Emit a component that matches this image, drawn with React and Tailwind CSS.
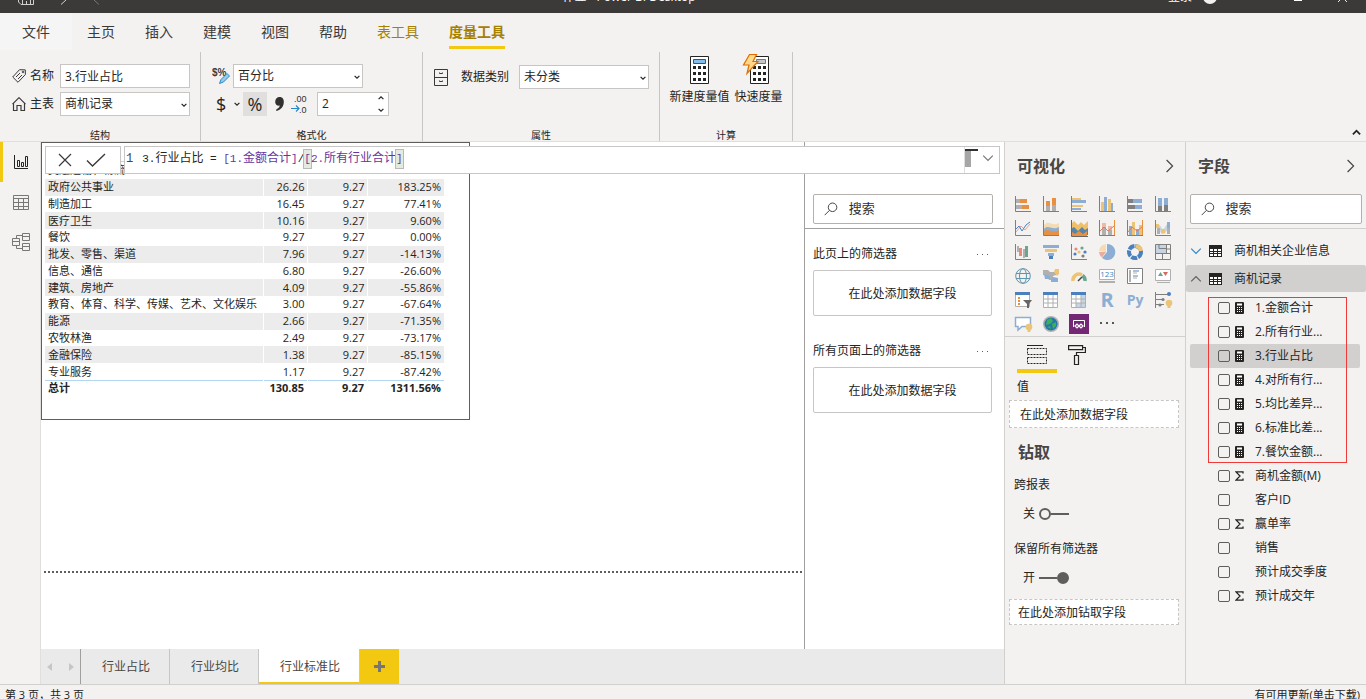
import React, { useState } from 'react';
import clsx from 'clsx';

const filas = [
    ['交通运输、物流', '39.16', '9.27', '322.42%'],
    ['政府公共事业', '26.26', '9.27', '183.25%'],
    ['制造加工', '16.45', '9.27', '77.41%'],
    ['医疗卫生', '10.16', '9.27', '9.60%'],
    ['餐饮', '9.27', '9.27', '0.00%'],
    ['批发、零售、渠道', '7.96', '9.27', '-14.13%'],
    ['信息、通信', '6.80', '9.27', '-26.60%'],
    ['建筑、房地产', '4.09', '9.27', '-55.86%'],
    ['教育、体育、科学、传媒、艺术、文化娱乐', '3.00', '9.27', '-67.64%'],
    ['能源', '2.66', '9.27', '-71.35%'],
    ['农牧林渔', '2.49', '9.27', '-73.17%'],
    ['金融保险', '1.38', '9.27', '-85.15%'],
    ['专业服务', '1.17', '9.27', '-87.42%']
];

const campos = [
    { nombre: '1.金额合计', icono: 'calc' },
    { nombre: '2.所有行业...', icono: 'calc' },
    { nombre: '3.行业占比', icono: 'calc', activo: true },
    { nombre: '4.对所有行...', icono: 'calc' },
    { nombre: '5.均比差异...', icono: 'calc' },
    { nombre: '6.标准比差...', icono: 'calc' },
    { nombre: '7.餐饮金额...', icono: 'calc' },
    { nombre: '商机金额(M)', icono: 'sigma' },
    { nombre: '客户ID' },
    { nombre: '赢单率', icono: 'sigma' },
    { nombre: '销售' },
    { nombre: '预计成交季度' },
    { nombre: '预计成交年', icono: 'sigma' }
];

const Chevron = ({ dir = 'down', className }) => {
    const d = {
        down: 'M1 3l4 4 4-4',
        up: 'M1 7l4-4 4 4',
        right: 'M3 0l5 5-5 5'
    };
    return (
        <svg viewBox="0 0 10 10" className={clsx('overflow-visible', className)} fill="none" stroke="currentColor">
            <path d={d[dir]} />
        </svg>
    );
};

const Lupa = () => (
    <svg viewBox="0 0 16 16" className="size-4" fill="none" stroke="#3b3a39" strokeWidth="1.1">
        <circle cx="10" cy="6" r="5" />
        <path d="M6.5 9.5L.8 15.2" />
    </svg>
);

const Calc = () => (
    <svg viewBox="0 0 9 12" className="h-3 w-[9px]">
        <rect width="9" height="12" rx="1" fill="#252423" />
        <path d="M2 2.5h5" stroke="#fff" strokeWidth="2" />
        <path d="M2 5.5h5M2 7.5h5M2 9.5h5" stroke="#fff" strokeDasharray="1 1" />
    </svg>
);

const Sigma = () => (
    <svg viewBox="0 0 9 10" className="h-[10px] w-[9px]" fill="none" stroke="#252423" strokeWidth="1.3">
        <path d="M8 2.5V.9H1l4 4.1-4 4.1h7V7.5" />
    </svg>
);

const TablaIcono = () => (
    <svg viewBox="0 0 13 12" className="h-3 w-[13px]">
        <rect width="13" height="12" fill="#252423" />
        <path d="M1 4h3v2H1zM5 4h3v2H5zM9 4h3v2H9zM1 7h3v1H1zM5 7h3v1H5zM9 7h3v1H9zM1 9h3v2H1zM5 9h3v2H5zM9 9h3v2H9z" fill="#fff" />
    </svg>
);

const Ejes = () => <path d="M.5 0v15.5H16" fill="none" stroke="#7f7f7f" />;

const O = '#e8903f';
const B = '#8caed4';
const G = '#b0b0b0';
const Y = '#ebc477';
const D = '#7f7f7f';
const N = '#4a80bd';

// Galería de visualizaciones, seis por fila
const visuales = [
    ['堆积条形图', <><path d="M1 3h4v4H1zM1 9h6v4H1z" fill={G} /><path d="M5 3h7v4H5zM7 9h7v4H7z" fill={O} /><Ejes /></>],
    ['堆积柱形图', <><path d="M3 10h4v5H3zM9 9h4v6H9z" fill={G} /><path d="M3 5h4v5H3zM9 2h4v7H9z" fill={O} /><Ejes /></>],
    ['簇状条形图', <><path d="M1 2h9v2H1zM1 9h11v2H1z" fill={Y} /><path d="M1 4h14v3H1zM1 12h9v2H1z" fill={B} /><Ejes /></>],
    ['簇状柱形图', <><path d="M2 6h3v9H2zM9 3h3v12H9z" fill={Y} /><path d="M5 1h3v14H5zM12 7h2v8h-2z" fill={B} /><Ejes /></>],
    ['百分比堆积条形图', <><path d="M1 3h5v4H1zM1 9h7v4H1z" fill={D} /><path d="M6 3h9v4H6zM8 9h7v4H8z" fill={B} /><Ejes /></>],
    ['百分比堆积柱形图', <><path d="M3 10h4v5H3zM9 9h4v6H9z" fill={D} /><path d="M3 2h4v8H3zM9 2h4v7H9z" fill={B} /><Ejes /></>],
    ['折线图', <><path d="M1 12l5-6 4 4 5-6" fill="none" stroke="#f0a09a" /><path d="M1 9l3-3 3 5 4-6 4-3" fill="none" stroke={N} /><Ejes /></>],
    ['分区图', <><path d="M1 5c5-6 8 2 15-2v7H1z" fill="#f3dcb4" /><path d="M1 9c4-5 8 2 15-2v6H1z" fill={B} /><path d="M1 11c5-3 8 3 15-1v5H1z" fill={O} /><Ejes /></>],
    ['堆积面积图', <><path d="M0 4l3-3 4 4 3-3 3 3 4-4v10H0z" fill="#efc06a" /><path d="M0 9l3-2 4 4 4-4 3 3 3-2v7H0z" fill="#5784a8" /><path d="M1 12l3 2 4-3 4 3 4-3v5H1z" fill={O} /><path d="M.5 0v16.5H17" fill="none" stroke="#666" /></>],
    ['折线和堆积柱形图', <><path d="M3 5h4v10H3zM9 9h4v6H9z" fill={G} /><path d="M3 3h4v4H3zM9 6h4v4H9z" fill="#ebbba6" /><path d="M1 11l4-4 4 4 6-5" fill="none" stroke="#e07a5f" /><Ejes /><path d="M15.5 0v15" stroke={O} /></>],
    ['折线和簇状柱形图', <><path d="M2 6h3v9H2zM9 9h3v6H9z" fill={B} /><path d="M5 2h3v13H5zM12 5h3v10h-3z" fill={Y} /><path d="M1 12l4-5 5 4 5-4" fill="none" stroke="#e07a5f" /><Ejes /><path d="M15.5 0v15" stroke={O} /></>],
    ['功能区图表', <><path d="M4 5c2 0 2 4 4 4s3-5 5-5v6c-2 0-2 4-5 4s-2-4-4-4z" fill="#c6d4e4" /><path d="M1 4h3v4H1zM6 9h4v4H6z" fill={Y} /><path d="M12 2h3v6h-3z" fill={B} /><path d="M2 8h3v6H2zM12 8h3v6h-3z" fill={G} /><Ejes /></>],
    ['瀑布图', <><path d="M2 2h2v6H2z" fill={G} /><path d="M4 4h3v8H4z" fill="#e48b80" /><path d="M8 5h2v9H8z" fill={G} /><path d="M10 2h3v11h-3z" fill="#6aa58f" /><Ejes /></>],
    ['漏斗图', <><path d="M0 1h16v3H0zM5 9h6v3H5z" fill={B} /><path d="M2 5h12v3H2z" fill={Y} /><path d="M6 12h4v3H6z" fill={N} /></>],
    ['散点图', <><Ejes /><circle cx="5" cy="5" r="1.6" fill="#e48b80" /><circle cx="11" cy="4" r="1.6" fill="#6aa58f" /><circle cx="14" cy="8" r="1.6" fill={N} /><circle cx="4" cy="10" r="1.6" fill={N} /><circle cx="8" cy="8" r="1.6" fill={Y} /><circle cx="12" cy="12" r="1.6" fill={D} /></>],
    ['饼图', <><path d="M8 8V0a8 8 0 1 1-5 14z" fill={B} /><path d="M7 8V0a8 8 0 0 0-7 7z" fill="#f3dcb4" /><path d="M7 8H0a8 8 0 0 0 3 5.5z" fill="#ebab9d" /></>],
    ['环形图', <><circle cx="8" cy="8" r="6" fill="none" stroke={N} strokeWidth="4" strokeDasharray="6 1" /><path d="M9 2a6 6 0 0 1 5 5" fill="none" stroke={Y} strokeWidth="4" /></>],
    ['树状图', <><path d="M1 1h10v8H1z" fill="#c6d4e4" /><path d="M.5.5h15v15H.5zM11.5.5v9M.5 9.5h15M7.5 9.5v6M11.5 5h4M4 .5v4h7" fill="none" stroke={D} /></>],
    ['地图', <g fill="none" stroke="#5f95ad"><circle cx="8" cy="8" r="7.3" /><ellipse cx="8" cy="8" rx="3.5" ry="7.3" /><path d="M1 5.5h14M1 10.5h14" /></g>],
    ['着色地图', <><path d="M0 2h5l2 2h6v3l-3 1v4H6L4 8 0 7z" fill={G} /><path d="M1 6l6 2v3H2zM10 9l5 1v4H8v-2z" fill={B} /><path d="M12 1h4v5l-2 2-3-4z" fill={Y} /></>],
    ['仪表', <><path d="M2 13a6 6 0 0 1 9-6" fill="none" stroke={Y} strokeWidth="3.5" /><path d="M11.5 7.5A6 6 0 0 1 14 13" fill="none" stroke="#6aa58f" strokeWidth="3.5" /><path d="M7 13l4-4" stroke="#444" strokeWidth="1.5" /></>],
    ['卡片图', <><path d="M.5 1.5h15v10H.5z" fill="#fff" stroke={G} /><text x="8" y="9" textAnchor="middle" fontSize="8" fill={N}>123</text><path d="M0 14h16" stroke={G} strokeWidth="2" /></>],
    ['多行卡', <><path d="M.5.5h15v15H.5z" fill="#fff" stroke={D} /><path d="M3 2v12" stroke={G} strokeWidth="2" /><path d="M6 3h6M6 8h5" stroke={B} strokeWidth="1.5" /><path d="M6 5h4M6 10h4" stroke={G} /></>],
    ['KPI', <><path d="M.5 1.5h15v11H.5z" fill="#fff" stroke={G} /><path d="M3 8l2.5-4L8 8z" fill="#6aa58f" /><path d="M8 4h5l-2.5 4z" fill="#d66a5e" /><path d="M2 14.5h13" stroke={G} /></>],
    ['切片器', <><path d="M.5.5h14v14H.5z" fill="#fff" stroke={G} /><path d="M0 0h15v3H0z" fill={N} /><path d="M3 5h2v2H3zM3 8h2v2H3zM3 11h2v2H3z" fill={O} /><path d="M8 8h9l-3 4v4h-2v-4z" fill="#666" /></>],
    ['表', <><path d="M.5.5h14v15H.5zM5 3v12M10 3v12M0 7h15M0 11h15" fill="#fff" stroke={G} /><path d="M0 0h15v3H0z" fill={N} /></>],
    ['矩阵', <><path d="M1 1h14v14H1z" fill="#fff" /><path d="M5 11h10v4H5zM10 3h5v8h-5z" fill="#c6d4e4" /><path d="M.5.5h14v15H.5zM5 3v12M10 3v12M0 7h15M0 11h15" fill="none" stroke={G} /><path d="M0 0h15v3H0z" fill={N} /></>],
    ['R 脚本', <text x="8" y="15" textAnchor="middle" fontSize="20" fontWeight="700" fill={B}>R</text>],
    ['Python', <text x="8" y="13" textAnchor="middle" fontSize="14" fontWeight="700" fill={B}>Py</text>],
    ['关键影响因素', <><path d="M.5 0v16M1 2.5h12M1 7.5h6M1 12.5h8" fill="none" stroke={D} /><circle cx="14" cy="2" r="2" fill={N} /><circle cx="8" cy="7.5" r="1.6" fill={D} /><circle cx="5" cy="13" r="1.6" fill={D} /><circle cx="14" cy="11" r="3.3" fill={Y} /><path d="M12.5 13h3v3h-3z" fill={Y} /></>],
    ['问答', <><path d="M.5 1.5h15v9H7l-4 3.5v-3.5H.5z" fill="#fff" stroke={B} strokeWidth="1.5" /><circle cx="14" cy="11" r="3.3" fill={Y} /><path d="M12.5 13h3v3h-3z" fill={Y} /></>],
    ['ArcGIS', <><circle cx="8" cy="8" r="8" fill={G} /><circle cx="8" cy="8" r="6.5" fill="#2277ad" /><path d="M4 4l4-2 2 3-3 3-4 1zM9 8l4-2v4l-3 3zM4 11l3-1 1 3z" fill="#3fae5a" /></>],
    ['Power Apps', <><path d="M-2-2h20v20H-2z" fill="#742774" /><path d="M2.5 11V4.5h11V11" fill="none" stroke="#fff" /><path d="M4 10l2-2 2 2-2 2zM8 10l2-2 2 2-2 2z" fill="none" stroke="#fff" strokeWidth="1.2" /></>],
    ['更多', <path d="M1 6h2v2H1zM7 6h2v2H7zM13 6h2v2h-2z" fill="#555" />]
];

const Grupo = ({ titulo, className, children }) => (
    <section className={clsx('flex flex-col border-r border-[#c8c6c4]', className)}>
        <div className="flex-1">{children}</div>
        <h2 className="text-center text-[10px] leading-3">{titulo}</h2>
    </section>
);

const Desplegable = ({ id, valor, etiqueta }) => (
    <span className="relative">
        <select id={id} aria-label={etiqueta} className="block h-6 w-[130px] appearance-none border border-[#c8c6c4] bg-white pl-1 text-xs">
            <option>{valor}</option>
        </select>
        <Chevron className="pointer-events-none absolute top-[10px] right-[3px] size-[6px] stroke-2" />
    </span>
);

const Buscar = ({ id }) => (
    <label htmlFor={id} className="flex h-[30px] items-center gap-[11px] rounded-[2px] border border-[#b3b0ad] bg-white pl-[10px]">
        <Lupa />
        <input id={id} type="search" placeholder="搜索" className="w-full min-w-0 text-[13px] outline-none placeholder:text-[#323130]" />
    </label>
);

const Filtro = ({ titulo }) => (
    <section className="mb-[27px]">
        <div className="mb-2 flex h-4 items-center justify-between pr-1">
            <h3 className="text-xs">{titulo}</h3>
            <button aria-label="更多选项" className="flex gap-1">
                <i className="size-px bg-[#605e5c]" />
                <i className="size-px bg-[#605e5c]" />
                <i className="size-px bg-[#605e5c]" />
            </button>
        </div>
        <div className="flex h-[46px] items-center justify-center rounded-[2px] border border-[#c8c6c4] pt-px text-xs">
            在此处添加数据字段
        </div>
    </section>
);

const Interruptor = ({ texto, inicial }) => {
    const [activo, guardarActivo] = useState(inicial);

    return (
        <label className="flex h-4 items-center gap-1 pl-[14px] text-xs">
            {texto}
            <input
                type="checkbox"
                className="sr-only"
                checked={activo}
                onChange={() => guardarActivo(!activo)}
            />
            <span className={clsx('flex items-center', activo && 'flex-row-reverse')}>
                <i className={clsx('size-3 rounded-full border-2 border-[#605e5c]', activo && 'bg-[#605e5c]')} />
                <i className="h-[2px] w-[18px] bg-[#605e5c]" />
            </span>
        </label>
    );
};

const BarraTitulo = () => (
    <header className="flex h-[13px] shrink-0 items-end overflow-hidden bg-[#3b3a39] text-xs text-white">
        <div className="flex h-8 w-[108px] shrink-0 items-center gap-5 pl-[18px]">
            <svg viewBox="0 0 16 16" className="size-4" fill="none" stroke="#d0d0d0">
                <path d="M.5.5h13l2 2v13H3l-2.5-2.5zM4.5 15.5V9.5h8v6M8.5 12v3" />
            </svg>
            <svg viewBox="0 0 16 16" className="size-4" fill="none" stroke="#d0d0d0">
                <path d="M3 2v5h5M3 7c6-6 14 0 9 4l-5 4.5" />
            </svg>
            <svg viewBox="0 0 16 16" className="size-4" fill="none" stroke="#777">
                <path d="M13 2v5H8M13 7C7 1-1 7 4 11l5 4.5" />
            </svg>
        </div>
        <h1 className="flex h-8 flex-1 items-center justify-center">作业 - Power BI Desktop</h1>
        <div className="flex h-8 w-[216px] shrink-0 items-center pl-[18px]">
            <a href="#login">登录</a>
            <i className="ml-[11px] size-[14px] rounded-full bg-[#f3f2f1]" />
            <button aria-label="最小化" className="mt-[6px] ml-[77px] h-[2px] w-2 bg-white" />
            <button aria-label="关闭" className="ml-9">
                <svg viewBox="0 0 10 10" className="size-[9px]" stroke="#fff"><path d="M0 0l10 10M10 0L0 10" /></svg>
            </button>
        </div>
    </header>
);

const Cinta = () => {
    const [nombre, guardarNombre] = useState('3.行业占比');
    const [decimales, guardarDecimales] = useState(2);

    return (
        <>
            <nav className="flex h-[37px] shrink-0 items-center bg-[#f3f2f1] text-sm text-[#3b3a39]">
                <a href="#file" className="flex h-full w-[72px] items-center justify-center bg-[#f5f5f5]">文件</a>
                <div className="ml-[15px] flex gap-[30px]">
                    <a href="#home">主页</a>
                    <a href="#insert">插入</a>
                    <a href="#model">建模</a>
                    <a href="#view">视图</a>
                    <a href="#help">帮助</a>
                    <a href="#table" className="text-[#a68100]">表工具</a>
                    <a href="#measure" className="relative font-bold text-[#a68100]">
                        度量工具
                        <i className="absolute inset-x-0 -bottom-[7px] h-[3px] bg-[#f2c811]" />
                    </a>
                </div>
            </nav>
            <div className="flex h-[92px] shrink-0 border-b border-[#e1dfdd] bg-[#f3f2f1] pt-[2px]">
                <Grupo titulo="结构" className="w-[201px]">
                    <div className="flex flex-col gap-1 pt-3 pl-3 text-xs">
                        <div className="flex items-center gap-1">
                            <svg viewBox="0 0 14 14" className="size-[14px]" fill="none" stroke="#3b3a39">
                                <path d="M7.5.7L13.3.9l.1 4.6L6 13.3.7 8z" />
                                <path d="M4 8l4-4M6 10l4-4" />
                                <circle cx="11" cy="3" r=".8" />
                            </svg>
                            <label htmlFor="nombre" className="w-[26px]">名称</label>
                            <input
                                id="nombre"
                                type="text"
                                className="h-6 w-[130px] border border-[#c8c6c4] bg-white px-1 text-xs"
                                value={nombre}
                                onChange={e => guardarNombre(e.target.value)}
                            />
                        </div>
                        <div className="flex items-center gap-1">
                            <svg viewBox="0 0 14 14" className="size-[14px]" fill="none" stroke="#3b3a39" strokeWidth="1.2">
                                <path d="M.5 7.2L7 .7l6.5 6.5M1.5 6.5v7H5V8.5h4v5h3.5v-7" />
                            </svg>
                            <label htmlFor="tabla" className="w-[26px]">主表</label>
                            <Desplegable id="tabla" valor="商机记录" />
                        </div>
                    </div>
                </Grupo>

                <Grupo titulo="格式化" className="w-[222px]">
                    <div className="flex flex-col gap-1 pt-3 pl-3 text-xs">
                        <div className="flex items-center gap-1">
                            <svg viewBox="0 0 16 16" className="size-4 overflow-visible">
                                <text x="-1" y="8" className="font-['Liberation_Sans',sans-serif] text-[10px] font-bold" fill="#3b3a39">$%</text>
                                <path d="M6.5 15.5l1.5-4 6-6 2.5 2.5-6 6z" fill="#9cc9ea" stroke="#2b88c8" />
                            </svg>
                            <Desplegable id="formato" etiqueta="格式" valor="百分比" />
                        </div>
                        <div className="flex h-6 items-center">
                            <button aria-label="货币" className="flex w-[30px] items-center gap-2 pl-[3px] text-[18px] leading-6">
                                $<Chevron className="size-[6px] shrink-0 stroke-2" />
                            </button>
                            <button aria-label="百分比" className="h-6 w-6 bg-[#e1dfdd] text-[18px] leading-6">%</button>
                            <button aria-label="千位分隔符" className="flex w-6 justify-center">
                                <svg viewBox="0 0 8 13" className="h-[14px] w-[9px]" fill="#323130">
                                    <path d="M4 0c3 0 4 2 4 4.5C8 9 5.5 12 1 13v-1.5c2-.8 3-2 3.2-3.5C2 8.5 0 7 0 4.3 0 1.5 2 0 4 0z" />
                                </svg>
                            </button>
                            <svg viewBox="0 0 16 20" className="h-5 w-4 overflow-visible">
                                <text x="3" y="8" className="font-['Liberation_Sans',sans-serif] text-[9px]" fill="#323130">.00</text>
                                <text x="8" y="19" className="font-['Liberation_Sans',sans-serif] text-[9px]" fill="#323130">.0</text>
                                <path d="M0 14.5h8M5 11.5l3 3-3 3" fill="none" stroke="#2b88c8" strokeWidth="1.2" />
                            </svg>
                            <div className="ml-[10px] flex h-6 w-[72px] border border-[#c8c6c4] bg-white">
                                <input
                                    aria-label="小数位数"
                                    type="text"
                                    className="w-full min-w-0 pl-1 text-xs"
                                    value={decimales}
                                    onChange={e => guardarDecimales(Number(e.target.value) || 0)}
                                />
                                <div className="flex w-[10px] shrink-0 flex-col items-start justify-center gap-[6px]">
                                    <button aria-label="增加" onClick={() => guardarDecimales(decimales + 1)}>
                                        <Chevron dir="up" className="size-[6px] stroke-2" />
                                    </button>
                                    <button aria-label="减少" onClick={() => guardarDecimales(Math.max(0, decimales - 1))}>
                                        <Chevron className="size-[6px] stroke-2" />
                                    </button>
                                </div>
                            </div>
                        </div>
                    </div>
                </Grupo>

                <Grupo titulo="属性" className="w-[237px]">
                    <div className="flex items-center pt-[13px] pl-[11px] text-xs">
                        <svg viewBox="0 0 14 17" className="h-[17px] w-[14px]" fill="none" stroke="#3b3a39">
                            <path d="M.5.5h13v16H.5zM.5 8.5h13M5.5 3.5v1h3v-1M5.5 11.5v1h3v-1" />
                        </svg>
                        <label htmlFor="categoria" className="ml-[13px] w-[58px]">数据类别</label>
                        <Desplegable id="categoria" valor="未分类" />
                    </div>
                </Grupo>

                <Grupo titulo="计算" className="w-[133px]">
                    <div className="flex justify-center gap-1 pt-[2px] text-xs">
                        <button className="flex w-[61px] flex-col items-center gap-[3px] whitespace-nowrap">
                            <svg viewBox="1 0 28 32" className="h-8 w-7">
                                <path d="M5.5 2.5h18v27h-18z" fill="#fff" stroke="#252423" />
                                <path d="M8.5 5.5h12v4h-12z" fill="#83beec" stroke="#0063b1" />
                                <path d="M8 13.5h13M8 19.5h13M8 25.5h13" stroke="#252423" strokeWidth="3" strokeDasharray="3 2" />
                            </svg>
                            新建度量值
                        </button>
                        <button className="flex w-[49px] flex-col items-center gap-[3px] whitespace-nowrap">
                            <svg viewBox="3 0 28 32" className="h-8 w-7 overflow-visible">
                                <path d="M8.5 2.5h18v27h-18z" fill="#fff" stroke="#252423" />
                                <path d="M14.5 5.5h9v4h-9z" fill="#c8c6c4" stroke="#797775" />
                                <path d="M11 13.5h13M11 19.5h13M11 25.5h13" stroke="#252423" strokeWidth="3" strokeDasharray="3 2" />
                                <path d="M7.5.5h7l-3.5 7h5L5 19.5l2-8.5H1.5z" fill="#ffd88a" stroke="#e06c00" strokeWidth="1.2" />
                            </svg>
                            快速度量
                        </button>
                    </div>
                </Grupo>

                <div className="flex flex-1 items-end justify-end pr-[5px] pb-1">
                    <button aria-label="折叠功能区">
                        <Chevron dir="up" className="size-[9px] stroke-2" />
                    </button>
                </div>
            </div>
        </>
    );
};

const BarraFormula = () => (
    <div className="absolute inset-x-1 top-1 flex h-7 gap-[3px]">
        <div className="flex w-[76px] shrink-0 items-center gap-[14px] border border-[#c8c6c4] bg-white pl-3">
            <button aria-label="取消">
                <svg viewBox="0 0 14 14" className="size-[14px]" fill="none" stroke="#3b3a39" strokeWidth="1.2">
                    <path d="M1 1l12 12M13 1L1 13" />
                </svg>
            </button>
            <button aria-label="提交">
                <svg viewBox="0 0 20 14" className="h-[14px] w-5" fill="none" stroke="#3b3a39" strokeWidth="1.4">
                    <path d="M1 7.5l5.5 5.5L19 1" />
                </svg>
            </button>
        </div>
        <div className="flex flex-1 border border-[#c8c6c4] bg-white pl-px">
            <code className="flex flex-1 items-baseline pt-[3px] font-['Liberation_Mono','Noto_Sans_CJK_SC',monospace] text-[11px] leading-[18px] whitespace-pre">
                <span className="mr-[9px] text-xs text-[#2b4a6f]">1</span>
                <span>3.</span>
                <span className="text-xs">行业占比</span>
                <span> = </span>
                <span className="text-[#68349c]">[1.</span>
                <span className="text-xs text-[#68349c]">金额合计</span>
                <span className="text-[#68349c]">]</span>
                <span>/</span>
                <span className="bg-[#e3ebdf] text-[#68349c] outline outline-[#b9b9b9]">[</span>
                <span className="text-[#68349c]">2.</span>
                <span className="text-xs text-[#68349c]">所有行业合计</span>
                <span className="bg-[#e3ebdf] text-[#68349c] outline outline-[#b9b9b9]">]</span>
            </code>
            <div className="flex w-[35px] items-start border-l border-[#e1dfdd] pt-[2px]">
                <svg viewBox="0 0 13 18" className="h-[18px] w-[13px]">
                    <path d="M0 1h6v17H0z" fill="#a6a6a6" />
                    <path d="M0 0h13v2H0z" fill="#323130" />
                </svg>
                <button aria-label="展开" className="mt-[3px] ml-1">
                    <Chevron className="size-3 text-[#797775]" />
                </button>
            </div>
        </div>
    </div>
);

const Lienzo = () => (
    <div className="flex min-w-0 flex-1 flex-col bg-white">
        <div className="h-[278px] w-[429px] border border-[#605e5c] pl-[3px]">
            <div className="h-[19px] w-[399px] border-b border-[#b3d6f2]" />
            <table className="h-[233px] w-[399px] table-fixed text-[11px] leading-[14px]">
                <colgroup>
                    <col className="w-[218px]" />
                    <col className="w-[44px]" />
                    <col className="w-[60px]" />
                    <col className="w-[77px]" />
                </colgroup>
                <tbody>
                    {filas.map(([sector, importe, media, diferencia]) => (
                        <tr key={sector} className="even:bg-[#ececec]">
                            <td className="border-r border-white p-0 pl-[3px] whitespace-nowrap">{sector}</td>
                            <td className="border-r border-white p-0 pr-[2px] text-right">{importe}</td>
                            <td className="border-r border-white p-0 pr-[2px] text-right">{media}</td>
                            <td className="p-0 pr-[3px] text-right">{diferencia}</td>
                        </tr>
                    ))}
                </tbody>
                <tfoot>
                    <tr className="border-t border-[#b3d6f2] font-bold">
                        <td className="p-0 pl-[3px]">总计</td>
                        <td className="p-0 pr-[3px] text-right">130.85</td>
                        <td className="p-0 pr-[3px] text-right">9.27</td>
                        <td className="p-0 pr-[3px] text-right">1311.56%</td>
                    </tr>
                </tfoot>
            </table>
        </div>
        <div className="mt-auto mr-[2px] mb-[76px] ml-[3px] border-t-2 border-dotted border-[#605e5c]" />
    </div>
);

const PanelVisual = () => (
    <aside className="w-[181px] shrink-0 border-l border-[#d2d0ce] bg-[#f3f2f1] text-xs">
        <div className="flex h-12 items-center justify-between pr-[10px] pl-3">
            <h2 className="text-base font-bold text-[#484644]">可视化</h2>
            <button aria-label="折叠可视化"><Chevron dir="right" className="size-3 stroke-1 text-[#484644]" /></button>
        </div>
        <div className="grid w-[172px] grid-cols-6 pt-[2px] pl-1">
            {visuales.map(([titulo, dibujo]) => (
                <button key={titulo} aria-label={titulo} className="flex h-6 w-7 items-center justify-center">
                    <svg viewBox="0 0 16 16" className="size-4 overflow-visible">{dibujo}</svg>
                </button>
            ))}
        </div>
        <div className="flex border-t border-[#d2d0ce] pt-2 pl-3">
            <button aria-label="字段" className="flex w-10 flex-col items-center border-b-4 border-[#f2c811] pb-1">
                <svg viewBox="0 0 20 20" className="size-5" fill="none" stroke="#252423">
                    <path d="M0 .5h16" />
                    <path d="M.5 3.5h19v6H.5zM.5 12.5h19v6H.5z" strokeDasharray="2 1" />
                </svg>
            </button>
            <button aria-label="格式" className="flex w-10 items-start justify-center">
                <svg viewBox="0 0 18 20" className="h-5 w-[18px]" fill="none" stroke="#252423" strokeWidth="1.2">
                    <path d="M.6.6h14v4H.6zM14.6 2.5h2.8v5H8.5v3M6.5 10.5h4v9h-4z" />
                </svg>
            </button>
        </div>
        <div className="pr-[6px] pl-1">
            <h3 className="mt-[6px] mb-[5px] pl-2 leading-4">值</h3>
            <div className="flex h-7 items-center border border-dashed border-[#c8c6c4] bg-white pt-px pl-[10px]">在此处添加数据字段</div>
            <h2 className="mt-3 pl-[9px] text-base leading-6 font-bold text-[#484644]">钻取</h2>
            <div className="mt-[13px] pl-[5px] leading-4">跨报表</div>
        </div>
        <div className="mt-[13px] pl-1"><Interruptor texto="关" inicial={false} /></div>
        <div className="mt-[19px] pl-[9px] leading-4">保留所有筛选器</div>
        <div className="mt-[13px] pl-1"><Interruptor texto="开" inicial={true} /></div>
        <div className="mt-[13px] pr-[6px] pl-1">
            <div className="flex h-[26px] items-center border border-dashed border-[#c8c6c4] bg-white pt-px pl-2">在此处添加钻取字段</div>
        </div>
    </aside>
);

const PanelCampos = () => (
    <aside className="w-[181px] shrink-0 border-l border-[#d2d0ce] bg-[#f3f2f1] text-xs">
        <div className="flex h-12 items-center justify-between pr-[10px] pl-3">
            <h2 className="text-base font-bold text-[#484644]">字段</h2>
            <button aria-label="折叠字段"><Chevron dir="right" className="size-3 stroke-1 text-[#484644]" /></button>
        </div>
        <div className="border-b border-[#d2d0ce] px-1 py-1">
            <Buscar id="buscar-campos" />
        </div>
        <button className="mt-2 flex h-7 w-full items-center pl-1">
            <Chevron className="size-3 text-[#2b88c8]" />
            <span className="mr-3 ml-[7px]"><TablaIcono /></span>
            商机相关企业信息
        </button>
        <button className="flex h-[27px] w-full items-center rounded-[2px] bg-[#d2d0ce] pl-1">
            <Chevron dir="up" className="size-3 text-[#605e5c]" />
            <span className="mr-3 ml-[7px]"><TablaIcono /></span>
            商机记录
        </button>
        <ul className="relative pt-[4px] pr-[6px] pl-1">
            {campos.map(({ nombre, icono, activo }) => (
                <li key={nombre} className={clsx('rounded-[2px]', activo && 'bg-[#d2d0ce]')}>
                    <label className="flex h-6 items-center pl-7">
                        <input type="checkbox" className="size-3 appearance-none rounded-[2px] border border-[#605e5c]" />
                        <span className="ml-[5px] w-5">
                            {icono === 'calc' && <Calc />}
                            {icono === 'sigma' && <Sigma />}
                        </span>
                        {nombre}
                    </label>
                </li>
            ))}
            {/* Marco rojo sobre las medidas */}
            <li aria-hidden="true" className="pointer-events-none absolute top-[5px] left-[22px] h-[166px] w-[139px] border border-[#f03a3a]" />
        </ul>
    </aside>
);

export default function App() {
    const [pagina, guardarPagina] = useState('行业标准比');

    return (
        <div className="flex h-screen flex-col overflow-hidden bg-[#f3f2f1] font-['Open_Sans','Noto_Sans_CJK_SC',sans-serif] text-[#252423]">
            <BarraTitulo />
            <Cinta />
            <main className="flex min-h-0 flex-1">
                <nav className="flex w-[41px] shrink-0 flex-col border-r border-[#e1dfdd] text-[#797775]">
                    <button aria-label="报表" className="flex h-10 items-center justify-center border-l-[3px] border-[#f2c811] pr-px text-[#252423]">
                        <svg viewBox="0 0 14 15" className="h-[15px] w-[14px]" fill="none" stroke="currentColor">
                            <path d="M.5 0v13.5H14M3.5 5.5h2v6h-2zM7.5 7.5h2v4h-2zM11.5 1.5h2v10h-2z" />
                        </svg>
                    </button>
                    <button aria-label="数据" className="flex h-10 items-center justify-center pl-[2px]">
                        <svg viewBox="0 0 16 15" className="h-[15px] w-4" fill="none" stroke="currentColor">
                            <path d="M.5.5h15v14H.5zM.5 3.5h15M.5 7.5h15M.5 11.5h15M5.5 3.5v11M10.5 3.5v11" />
                        </svg>
                    </button>
                    <button aria-label="模型" className="flex h-10 items-center justify-center pl-[2px]">
                        <svg viewBox="0 0 18 18" className="size-[18px]" fill="none" stroke="currentColor">
                            <path d="M.5 5.5h7v7h-7zM.5 8.5h7M10.5.5h7v7h-7zM10.5 3.5h7M10.5 10.5h7v7h-7zM10.5 13.5h7M4.5 5.5v-3h6M4.5 12.5v3h6" />
                        </svg>
                    </button>
                </nav>

                <div className="relative flex min-w-0 flex-1 flex-col">
                    <div className="flex min-h-0 flex-1">
                        <Lienzo />
                        <aside className="w-[200px] shrink-0 border-l border-[#a19f9d] bg-white pt-[52px]">
                            <div className="border-b border-[#a19f9d] pr-[11px] pb-1 pl-2">
                                <Buscar id="buscar-filtros" />
                            </div>
                            <div className="pt-[17px] pr-3 pl-2">
                                <Filtro titulo="此页上的筛选器" />
                                <Filtro titulo="所有页面上的筛选器" />
                            </div>
                        </aside>
                    </div>
                    <div className="flex h-[35px] shrink-0 bg-[#eaeaea] text-xs text-[#484644]">
                        <div className="flex w-10 items-center justify-between border-r border-[#a19f9d] px-[6px]">
                            <button aria-label="上一页" className="border-y-4 border-r-[5px] border-y-transparent border-r-[#c8c6c4]" />
                            <button aria-label="下一页" className="border-y-4 border-l-[5px] border-y-transparent border-l-[#c8c6c4]" />
                        </div>
                        {['行业占比', '行业均比', '行业标准比'].map(p => (
                            <button
                                key={p}
                                className={clsx(
                                    'border-r border-[#c8c6c4] pr-[19px] pl-[21px]',
                                    p === pagina && 'bg-white shadow-[inset_0_-2px_0_#f2c811]'
                                )}
                                onClick={() => guardarPagina(p)}
                            >
                                {p}
                            </button>
                        ))}
                        <button aria-label="新建页" className="flex w-[39px] items-center justify-center bg-[#f2c811]">
                            <svg viewBox="0 0 11 11" className="size-[11px]" stroke="#767676" strokeWidth="3">
                                <path d="M5.5 0v11M0 5.5h11" />
                            </svg>
                        </button>
                    </div>
                    <BarraFormula />
                </div>

                <PanelVisual />
                <PanelCampos />
            </main>
            <footer className="flex h-[15px] shrink-0 justify-between overflow-hidden border-t border-[#d2d0ce] pr-[6px] pl-[5px] text-[11px] leading-5">
                <span>第 3 页，共 3 页</span>
                <a href="#update">有可用更新(单击下载)</a>
            </footer>
        </div>
    );
}
